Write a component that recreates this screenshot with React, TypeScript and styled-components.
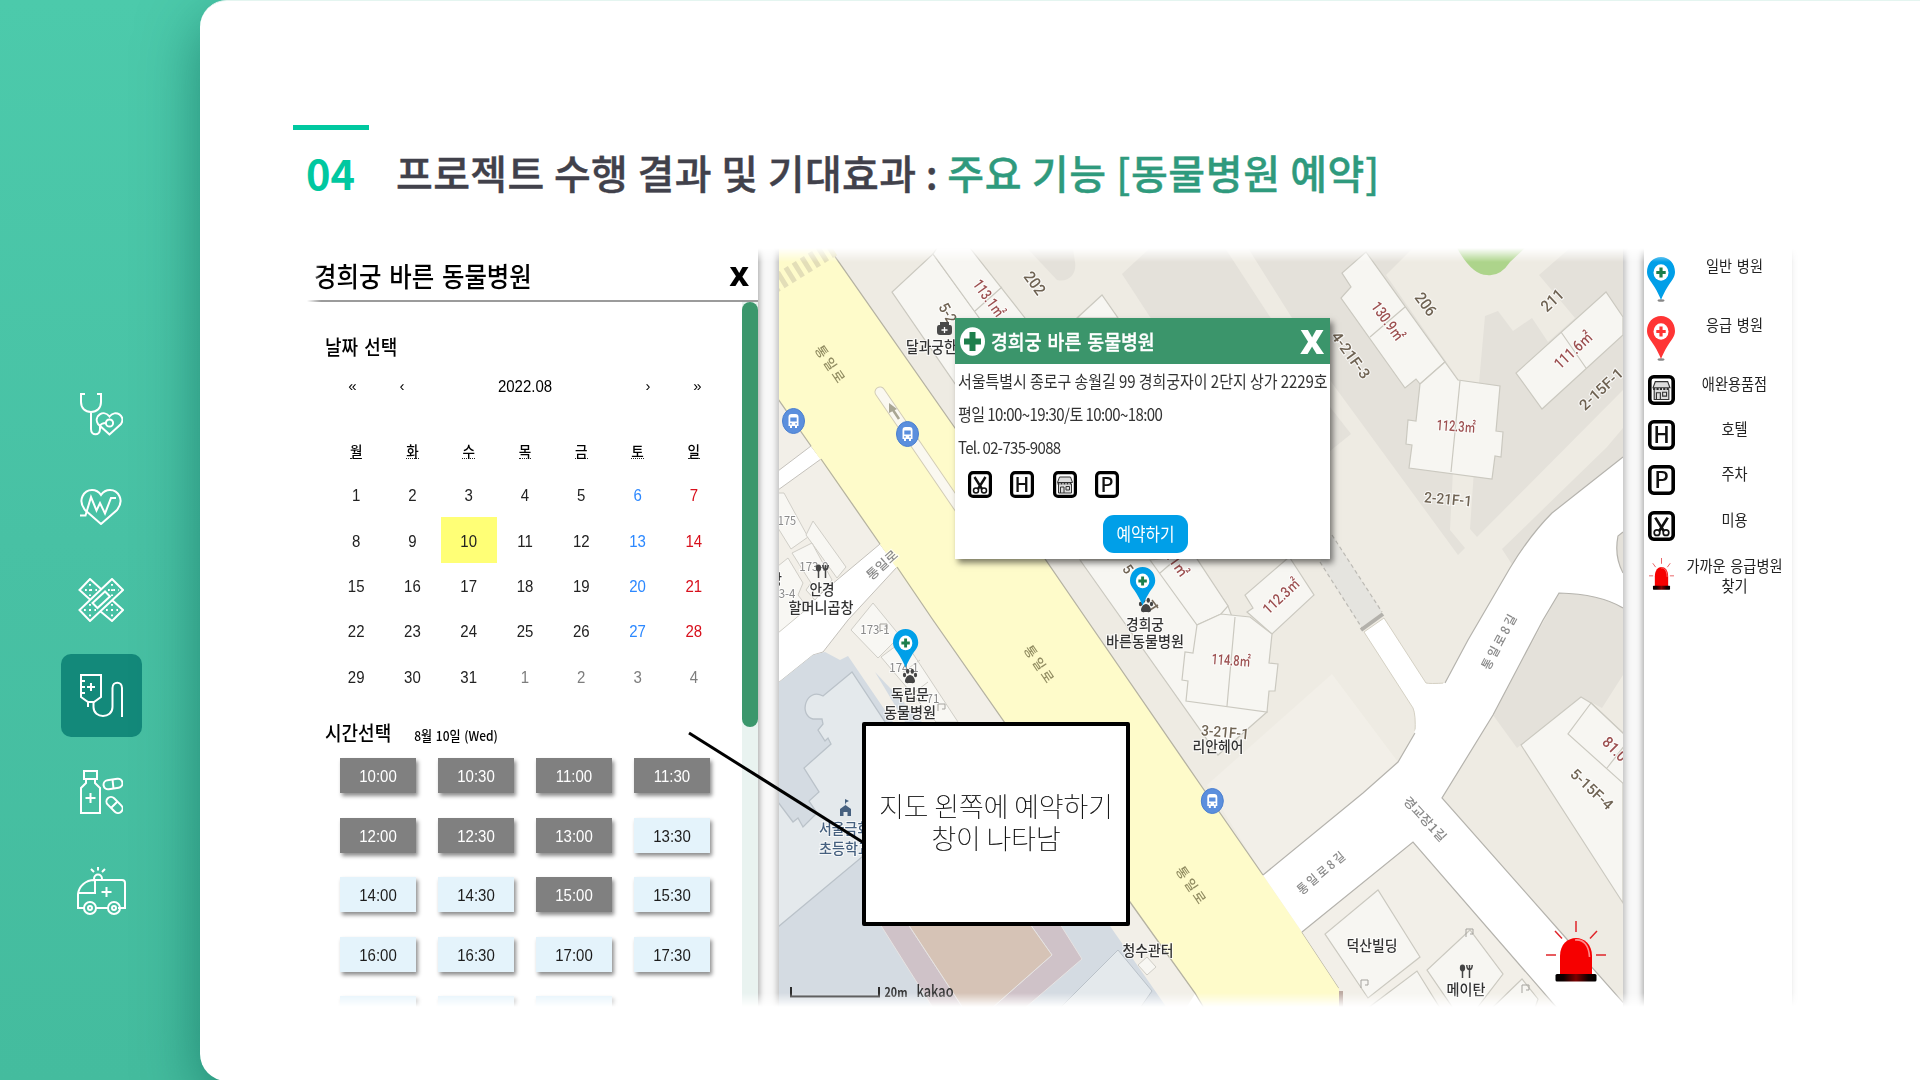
import React from 'react';
import styled, { createGlobalStyle } from 'styled-components';

const KR = '"Noto Sans CJK KR", "Noto Sans", sans-serif';
const NUM = '"Liberation Sans", "Noto Sans CJK KR", sans-serif';
const GREEN = '#3b956b';

const Global = createGlobalStyle`
  * { box-sizing: border-box; }
  body { margin: 0; overflow: hidden; font-family: ${KR}; }
`;

const Slide = styled.div`
  width: 1920px;
  height: 1080px;
  display: flex;
  overflow: hidden;
  background: linear-gradient(180deg, #4ccaab 0%, #48c1a4 50%, #44bc9e 100%);
`;

const SideNav = styled.nav`
  width: 200px;
  flex: none;
  padding: 393px 0 0 2px;
  display: flex;
  flex-direction: column;
  align-items: center;
  gap: 52.8px;
`;

const NavItem = styled.span<{ $active?: boolean }>`
  display: flex;
  padding: ${p => (p.$active ? '20px 19px' : '0')};
  margin: ${p => (p.$active ? '-20px -19px' : '0')};
  border-radius: 10px;
  background: ${p => (p.$active ? '#13897a' : 'transparent')};
`;

const Card = styled.main`
  flex: 1;
  height: 1081px;
  background: #fff;
  border-top: 1px solid #e4f5f0;
  border-radius: 27px 0 0 27px;
  box-shadow: 0 20px 60px rgba(0, 85, 72, 0.52);
`;

const Heading = styled.header`
  height: 247px;
  padding: 124px 0 0 93px;
`;

const Accent = styled.div`
  width: 76px;
  height: 5px;
  background: #00c8a0;
`;

const TitleRow = styled.h1`
  margin: 10px 0 0 13px;
  display: flex;
  align-items: center;
  height: 64px;
  font-size: 40px;
  font-weight: 500;
  line-height: 64px;
  letter-spacing: 0.35px;
  color: #41414b;
  white-space: nowrap;
  -webkit-text-stroke: 0.4px currentColor;
`;

const Num = styled.span`
  width: 90px;
  font-size: 41.5px;
  font-weight: 700;
  letter-spacing: 0;
  color: #00c8a0;
  -webkit-text-stroke: 0;
`;

const Feature = styled.span`
  color: #2f9a7d;
  letter-spacing: 0.6px;
`;

const Board = styled.section`
  position: relative;
  margin-left: 103px;
  width: 1496px;
  height: 760px;
  display: flex;
  background: #f8f8f8;
  mask-image: linear-gradient(180deg, transparent 0, #000 14px, #000 745px, transparent 759px),
    linear-gradient(90deg, transparent 4px, #000 18px, #000 1486px, transparent 1496px);
  mask-composite: intersect;
`;

const Stretch = styled.span<{ $y?: number; $ls?: number }>`
  display: inline-block;
  white-space: nowrap;
  letter-spacing: ${p => p.$ls ?? 0}px;
  transform: scaleY(${p => p.$y ?? 1.12});
`;

const Booking = styled.div`
  width: 455px;
  flex: none;
  background: #fff;
  display: flex;
  flex-direction: column;
  position: relative;
  z-index: 1;
  box-shadow: 2px 0 5px rgba(0, 0, 0, 0.28);
`;

const BookingHead = styled.div`
  height: 54px;
  flex: none;
  border-bottom: 2px solid #9b9b9b;
  display: flex;
  align-items: center;
  justify-content: space-between;
  padding: 2px 9px 0 11px;
  font-size: 24.4px;
  font-weight: 500;
  word-spacing: 2.4px;
`;

const CloseX = styled.span<{ $size: number }>`
  font: 800 ${p => p.$size}px/1 "Open Sans", sans-serif;
`;

const BookingBody = styled.div`
  flex: 1;
  min-height: 0;
  display: flex;
  overflow: hidden;
`;

const BookingMain = styled.div`
  flex: 1;
`;

const ScrollTrack = styled.div`
  width: 16px;
  height: 720px;
  background: #e9f3f0;
`;

const ScrollThumb = styled.div`
  height: 425px;
  border-radius: 8px;
  background: #3b976c;
`;

const SectionTitle = styled.div`
  padding-left: 22px;
  display: flex;
  align-items: center;
  font-size: 18px;
  font-weight: 500;
  line-height: 30px;
  word-spacing: 2px;
`;

const DateTitle = styled(SectionTitle)`
  margin-top: 29px;
`;

const TimeTitle = styled(SectionTitle)`
  margin-top: 16px;
  gap: 23px;
`;

const SubDate = styled.span`
  font-size: 12px;
  padding-top: 5px;
  word-spacing: 1px;
`;

const MonthNav = styled.div`
  margin: 8px 0 0 25px;
  width: 394px;
  height: 34px;
  display: grid;
  grid-template-columns: 49px 50px 1fr 50px 49px;
  align-items: center;
  text-align: center;
  font: 15px/34px ${NUM};
`;

const Month = styled(Stretch)`
  font-size: 15px;
`;

const Calendar = styled.div`
  margin: 22px 0 0 25px;
  width: 394px;
  display: grid;
  grid-template-columns: repeat(7, 1fr);
  grid-template-rows: 47px repeat(5, 45.4px);
`;

const Weekday = styled.span`
  display: flex;
  align-items: center;
  justify-content: center;
  padding-top: 4px;
  font-size: 13.6px;
  font-weight: 500;
`;

const WeekdayLabel = styled.span`
  line-height: 16px;
  border-bottom: 1px dotted #222;
`;

type Tone = 'week' | 'sat' | 'sun' | 'next';
const tones: Record<Tone, string> = { week: '#222', sat: '#2c88ff', sun: '#d8101c', next: '#7d7d7d' };

const Day = styled.span<{ $tone: Tone; $picked: boolean }>`
  display: flex;
  align-items: center;
  justify-content: center;
  font: 15px/1 ${NUM};
  color: ${p => tones[p.$tone]};
  background: ${p => (p.$picked ? '#ffff76' : 'transparent')};
`;

const Slots = styled.div`
  margin: 8px 0 0 37px;
  display: grid;
  grid-template-columns: repeat(4, 76px);
  grid-auto-rows: 35px;
  gap: 24.6px 22px;
`;

const Slot = styled.span<{ $taken: boolean }>`
  display: flex;
  align-items: center;
  justify-content: center;
  font: 15px/1 ${NUM};
  color: ${p => (p.$taken ? '#fff' : '#1d1d1d')};
  background: ${p => (p.$taken ? '#808080' : '#e4f3fb')};
  box-shadow: 2px 3px 4px rgba(0, 0, 0, 0.45);
`;

const MapPane = styled.div`
  position: relative;
  width: 844px;
  margin: 0 21px;
  flex: none;
  box-shadow: 0 0 6px 2px rgba(0, 0, 0, 0.25);
`;

const Popup = styled.div`
  position: absolute;
  left: 176px;
  top: 70px;
  width: 375px;
  height: 241px;
  background: #fff;
  box-shadow: 3px 4px 6px rgba(0, 0, 0, 0.5);
  display: flex;
  flex-direction: column;
`;

const PopupHead = styled.div`
  height: 46px;
  background: ${GREEN};
  color: #fff;
  display: flex;
  align-items: center;
  padding: 0 6px 0 5px;
  font-size: 18.3px;
  font-weight: 500;
  word-spacing: 2px;
`;

const PopupName = styled.span`
  flex: 1;
  padding-left: 6px;
  -webkit-text-stroke: 0.3px currentColor;
`;

const PopupLine = styled.div`
  padding-left: 3px;
  height: 33.2px;
  line-height: 33.2px;
  font-size: 15px;
  color: #333;
  white-space: nowrap;
`;

const PopupIcons = styled.div`
  padding: 7px 0 0 12.5px;
  display: flex;
  gap: 18.5px;
`;

const Reserve = styled.div`
  align-self: center;
  margin: 17.5px 0 0 6px;
  width: 85px;
  height: 38px;
  border-radius: 11px;
  background: #009fe8;
  color: #fff;
  font-size: 15.8px;
  line-height: 37px;
  text-align: center;
`;

const Legend = styled.div`
  width: 148px;
  flex: none;
  background: #fff;
  padding: 7px 3px 0 2px;
  display: flex;
  flex-direction: column;
  box-shadow: -2px 0 5px rgba(0, 0, 0, 0.28);
`;

const LegendRow = styled.div<{ $h: number }>`
  height: ${p => p.$h}px;
  display: grid;
  grid-template-columns: 30px 1fr;
  column-gap: 4px;
  justify-items: center;
  align-items: start;
  font-size: 14.2px;
  line-height: 20px;
  word-spacing: 1.5px;
  color: #222;
  text-align: center;

  svg {
    margin-top: 2px;
  }
`;

const TwoLines = styled(Stretch)`
  line-height: 18px;
  padding-top: 1px;
`;

const Callout = styled.div`
  position: absolute;
  left: 559px;
  top: 474px;
  width: 268px;
  height: 204px;
  padding-bottom: 5px;
  border: 4px solid #000;
  border-radius: 2px;
  background: #fff;
  display: flex;
  align-items: center;
  justify-content: center;
  text-align: center;
  font-size: 26.8px;
  font-weight: 100;
  line-height: 32px;
  color: #000;
  -webkit-text-stroke: 0.2px #000;
  white-space: nowrap;
  z-index: 3;
`;

const Connector = styled.svg`
  position: absolute;
  left: 383px;
  top: 480px;
  z-index: 2;
`;

/* ---------- icons ---------- */

const line = { fill: 'none', stroke: '#fff', strokeWidth: 2 } as const;

const Stethoscope = () => (
  <svg width="43" height="43" viewBox="0 0 43 43" {...line}>
    <path d="M5 1H1v8c0 6 4 10 10 10s10-4 10-10V1h-4M11 19v17c0 7 9 7 9 0v-4" />
    <path d="M29.500 41.500 18 31c-5-8 6-15 11.500-7.500C35 16 46.500 23 41 31Z" />
    <circle cx="29.500" cy="30" r="3.600" />
    <path d="M20 33c1-2.500 3-3 6-3" />
  </svg>
);
const HeartBeat = () => (
  <svg width="42" height="36" viewBox="0 0 42 36" {...line}>
    <path d="M21 35 5 21C-3 11 4 1 12 1c4 0 7 2 9 5 2-3 5-5 9-5 8 0 15 10 7 20Z" />
    <path d="M0 26.500h5.500L11 8l5.500 13.500L20 14l5 10.500L31 9h5" />
  </svg>
);
const Plasters = () => (
  <svg width="46" height="44" viewBox="0 0 46 44" {...line}>
    <path d="M34 1 1.500 32 12 43 45 12ZM23 11 12 1 1.500 12l11 10M22 33l12 10 11-11-11-10" />
    <path d="M27 13.500 14.500 25l5 5L32 18.500Z" />
    <g strokeDasharray="1.800 3.400">
      <path d="M12 6v12M7 12h12M34 6v12M30 12h11M12 26v13M6 32h12M34 26v13M28 32h12" />
    </g>
  </svg>
);
const IvBag = () => (
  <svg width="43" height="43" viewBox="0 0 43 43" {...line}>
    <path d="M1 1h20v22l-7 5H8l-7-5ZM1 7h4M1 13h4M1 19h4M8 28v5M11 9v8M7 13h8" />
    <path d="M13.500 28v5c0 12 19 12 19 0V14c0-7 9.500-7 9.500 0v29" />
  </svg>
);
const Bottle = () => (
  <svg width="43" height="44" viewBox="0 0 43 44" {...line}>
    <path d="M4 1h13v8H4ZM6 9v4L1 18v25h19V18l-5-5V9M10.500 23v10M5.500 28h10" />
    <rect x="-9.500" y="-4.500" width="19" height="9" rx="4.500" transform="translate(33 14) rotate(-9)" />
    <rect x="-9.500" y="-4.500" width="19" height="9" rx="4.500" transform="translate(34.500 35) rotate(45)" />
    <path d="m32.500 9.500 1 9M31 38l6.500-6.500" />
  </svg>
);
const Ambulance = () => (
  <svg width="49" height="48" viewBox="0 0 49 48" {...line}>
    <path d="M8 41H1V27c1-8 8-14 16-14h28q3 0 3 3v25h-7M18 41h14M1 26h17V13M17 12c0-6 8-6 8 0M29.500 20v10M24.500 25h10" />
    <path d="m14 2 3 3M21 0v3.500M28 2l-3 3" />
    <circle cx="13" cy="41" r="6" />
    <circle cx="13" cy="41" r="2" />
    <circle cx="37" cy="41" r="6" />
    <circle cx="37" cy="41" r="2" />
  </svg>
);

type Kind = 'H' | 'P' | 'cut' | 'shop';
const Badge = ({ kind, w = 24, h = 27 }: { kind: Kind; w?: number; h?: number }) => (
  <svg width={w} height={h} viewBox="0 0 24 27" preserveAspectRatio="none">
    <rect x="1.600" y="1.600" width="20.800" height="23.800" rx="3.500" fill="#fff" stroke="#000" strokeWidth="3.200" />
    {(kind === 'H' || kind === 'P') && (
      <text x="12" y="20.800" textAnchor="middle" fontFamily="Noto Sans CJK KR" fontSize="20" fontWeight="500" fill="#111">
        {kind}
      </text>
    )}
    {kind === 'cut' && (
      <g fill="none" stroke="#111">
        <path d="m6.500 6 7.500 12M17.500 6 10 18" strokeWidth="2.400" />
        <circle cx="8" cy="19.500" r="2.500" strokeWidth="1.500" />
        <circle cx="16" cy="19.500" r="2.500" strokeWidth="1.500" />
      </g>
    )}
    {kind === 'shop' && (
      <g fill="none" stroke="#333" strokeWidth="1">
        <path d="M6.500 6h11l2 5.500h-15ZM5.500 13v9h13v-9" fill="#ddd" />
        <path d="M4.500 12.500h15" strokeWidth="1.800" strokeDasharray="2 1" />
        <path d="M7.500 22v-6h3.500v6M13 15.500h3.500v3.500H13Z" />
      </g>
    )}
  </svg>
);

const PinShape = ({ color, base = false }: { color: string; base?: boolean }) => (
  <g>
    {base && <ellipse cx="14" cy="43.500" rx="3.500" ry="1.300" fill="#888" />}
    <path d="M14 0C6 0 0 6.500 0 15c0 6 4 9 7.500 15 3 5 5 9 6.500 13 1.500-4 3.500-8 6.500-13C24 24 28 21 28 15 28 6.500 22 0 14 0Z" fill={color} />
    <ellipse cx="14" cy="15.500" rx="7.500" ry="8.200" fill="#fff" />
    <path d="M14 10.500v10M9.300 15.500h9.400" stroke={color === '#009fe8' ? '#1d7f4c' : color} strokeWidth="3.200" />
  </g>
);
const Pin = ({ color }: { color: string }) => (
  <svg width="28" height="45" viewBox="0 0 28 45"><PinShape color={color} base /></svg>
);

const SirenShape = () => (
  <g>
    <g stroke="#e0262b" strokeWidth="1.500">
      <path d="M30 0v11M9 10l7 7.500M51 10l-7 7.500M0 34h10M60 34H50" />
    </g>
    <path d="M14 54V35c0-24 32-24 32 0v19Z" fill="#f60000" />
    <path d="M29 19c9-1 14 6 14.500 17" fill="none" stroke="#ff8a8a" strokeWidth="1.600" />
    <rect x="9.500" y="53" width="41" height="7.500" rx="1.500" fill="url(#sirenBase)" />
  </g>
);
const SirenGradient = () => (
  <linearGradient id="sirenBase">
    <stop offset="0" stopColor="#000" />
    <stop offset=".2" stopColor="#100" />
    <stop offset=".5" stopColor="#7c0000" />
    <stop offset=".8" stopColor="#100" />
    <stop offset="1" stopColor="#000" />
  </linearGradient>
);

/* ---------- map ---------- */

const RED = '#9c5050';
const BROWN = '#6f6353';
const GRAY = '#8a8a8a';

type LabelProps = {
  x: number; y: number; children: string; r?: number; size?: number;
  color?: string; w?: number; weight?: number; halo?: string;
};
const Label = ({ x, y, children, r = 0, size = 13, color = '#333', w, weight = 500, halo = '#fff' }: LabelProps) => (
  <text
    transform={`translate(${x} ${y}) rotate(${r}) scale(1 1.1)`}
    y={size * 0.36}
    textAnchor="middle"
    fontFamily={color === RED || color === BROWN ? `Roboto, ${KR}` : KR}
    fontSize={size}
    fontWeight={weight}
    fill={color}
    stroke={halo}
    strokeWidth="2"
    strokeOpacity=".7"
    paintOrder="stroke"
    textLength={w}
    lengthAdjust="spacingAndGlyphs"
  >
    {children}
  </text>
);

const Bus = ({ x, y }: { x: number; y: number }) => (
  <g transform={`translate(${x} ${y})`}>
    <ellipse rx="11" ry="12.500" fill="#5b8fdd" stroke="#4a7fd0" />
    <path d="M-5-4q0-3 3-3h4q3 0 3 3v9h-1.500v2h-2V5h-3v2h-2V5H-5Z" fill="#fff" />
    <path d="M-3.200-3.500h6.400V.5h-6.400ZM-3.500 2.200h1.800v1.300h-1.800ZM1.700 2.200h1.800v1.300H1.700Z" fill="#5b8fdd" />
  </g>
);
const Paw = ({ x, y }: { x: number; y: number }) => (
  <g transform={`translate(${x} ${y})`} fill="#444">
    <path d="M0-1c3 0 5 4 5 6 0 3-3 2-5 2s-5 1-5-2c0-2 2-6 5-6Z" />
    <ellipse cx="-5.500" cy="-1" rx="1.600" ry="2.300" />
    <ellipse cx="5.500" cy="-1" rx="1.600" ry="2.300" />
    <ellipse cx="-2.300" cy="-4.800" rx="1.700" ry="2.500" />
    <ellipse cx="2.300" cy="-4.800" rx="1.700" ry="2.500" />
  </g>
);
const Fork = ({ x, y }: { x: number; y: number }) => (
  <g transform={`translate(${x} ${y})`} fill="none" stroke="#444" strokeWidth="1.500">
    <ellipse cx="-3.500" cy="-3" rx="1.900" ry="2.700" fill="#444" />
    <path d="M-3.500 0v7M3.500-1v8M.8-6c0 6 5.400 6 5.400 0M3.500-6v5" />
  </g>
);

const MapArt = () => (
  <svg width="844" height="760" viewBox="779 248 844 760" style={{ display: 'block' }}>
    <defs><SirenGradient /></defs>
    <rect x="779" y="248" width="844" height="760" fill="#eeebe3" />
    <g fill="#e4e1da">
      <path d="M1150 248 1122 274 1152 320H1272L1225 248Z" />
      <path d="M1248 248 1292 318 1332 383 1458 555 1465 548 1450 530 1453 470H1474L1470 529 1477 537 1623 390V248H1570L1539 275 1575 318 1548 342 1532 318 1513 331 1498 311 1485 316 1479 383 1459 380 1386 275 1413 248Z" />
      <path d="M1330 407 1351 434 1330 451Z" />
      <path d="M1502 549 1513 566 1552 513 1623 457V428L1607 447Z" />
      <path d="M1559 593Q1600 594 1623 608V675L1602 708 1581 697 1517 748 1493 715Z" />
      <path d="M1623 530 1617 540V557L1623 573Z" />
      <path d="M1027 248 1057 280C1070 283 1077 272 1075 262L1073 248Z" />
    </g>
    <path d="M1457 248Q1472 275 1487 275 1500 277 1510 262L1525 248Z" fill="#add48b" />
    <path d="M1207 785 1332 674 1398 762 1363 793 1263 875Z" fill="#f2efe8" />

    {/* west side of the boulevard */}
    <path d="M779 395 933 620 1206 1008H779Z" fill="#f2efe8" />
    <g fill="#fff" stroke="#c4c1bb">
      <path d="M778 471 811 446 821 459 778 490Z" />
      <path d="M880 544 837 580 778 630V683L813 655 823 652 848 620 897 567Z" />
    </g>
    <g fill="#f8f7f3" stroke="#d0cec7">
      <path d="M778 493 784 493 808 537 791 549 778 528Z" />
      <path d="M813 521 846 567 837 578 806 535Z" />
      <path d="M792 553 812 543 832 580 815 600 806 590 811 583Z" />
      <path d="M778 566 788 558 803 583 798 595 808 608 778 633Z" />
      <path d="M873 603 851 630 878 658 900 636Z" />
      <path d="M881 657 904 640 958 722H936Z" />
      <path d="M915 692 928 682M903 672 920 660" />
    </g>

    {/* school grounds */}
    <path d="M778 683 813 655 825 652 840 660 848 656 893 722 1110 926 1167 1008H778Z" fill="#d4dbe2" />
    <path d="M875 672 922 722H905Z" fill="#d4dbe2" />
    <path d="M852 672 823 696C806 687 798 715 813 719H822L823 724 818 730 825 741 828 738 831 744 804 768 819 792 809 801 817 813 803 827 798 818 793 822 778 802V927L862 857 885 722Z" fill="#e4e9ec" stroke="#bac2c9" strokeWidth="1.300" />
    <g stroke="#e6e3e2">
      <path d="M880 924H908L963 1008H933Z" fill="#cfc2c8" />
      <path d="M1030 924H1060L1082 959 1025 1008H992L1052 955Z" fill="#cfc2c8" />
      <path d="M908 924H1030L1052 955 992 1008H963Z" fill="#d6c3b6" />
    </g>
    <path d="M1118 950 1152 991 1140 1008H1060Z" fill="#e4e9ec" stroke="#bac2c9" />
    <path d="M1147 957 1156 967 1147 975 1138 965Z" fill="#f8f7f3" stroke="#d0cec7" />

    {/* boulevard */}
    <path d="M1186 1008 1195 994 1206 1008Z" fill="#fff" />
    <path d="M778 248H829L955 428 1087 620 1202 787 1263 875 1302 932 1339 988 1341 1008H1204L1195 993 1130 902 933 620 778 399Z" fill="#fefbca" />
    <path d="M829 248 955 428 1087 620 1202 787 1263 875M1302 932 1339 988M1204 1008 1195 993 1130 902 933 620 897 567M880 544 821 459M811 446 778 399" fill="none" stroke="#b5b2a2" strokeWidth="1.300" />
    <path d="M772 286 836 246" stroke="#e3deb8" strokeWidth="17" strokeDasharray="5 4.500" />
    <path d="M880 392 962 512" stroke="#d3cdb6" strokeWidth="11" strokeLinecap="round" />
    <path d="M880 392 962 512" stroke="#faf8f0" strokeWidth="9" strokeLinecap="round" />
    <path d="m899 419-8-12" stroke="#a9a693" strokeWidth="2.500" />
    <path d="m889 403 8 6-8 4Z" fill="#a9a693" />

    {/* side streets */}
    <path d="M1302 932 1413 842 1557 1008H1345L1339 988Z" fill="#f2efe8" />
    <path d="M1623 457 1552 513Q1530 535 1510 568L1468 640 1445 683 1415 733 1398 762 1363 793 1263 875 1302 932 1413 842 1557 1008H1628L1565 937 1442 798 1493 715 1543 620 1559 593Q1600 594 1623 608V573Q1614 556 1618 536L1623 532Z" fill="#fff" />
    <g fill="none" stroke="#b5b3ad" strokeWidth="1.200">
      <path d="M1623 457 1552 513Q1530 535 1510 568L1468 640 1445 683M1415 733 1398 762 1363 793 1263 875M1302 932 1413 842 1557 1008M1628 1008 1565 937 1442 798 1493 715 1543 620 1559 593Q1600 594 1623 608M1623 573Q1614 556 1618 536L1623 532" />
    </g>
    <path d="M1364 632 1413 708Q1416 715 1415 733L1445 683Q1430 684 1426 683L1384 618Z" fill="#fff" stroke="#d5d1c4" />
    <path d="M1415 733 1445 683" stroke="#fff" strokeWidth="2.500" />
    <path d="M1320 562 1332 535 1382 612 1362 628Z" fill="#e5e4df" />
    <path d="M1332 535 1382 612M1320 562 1362 628" stroke="#bcbab4" strokeWidth="1.200" strokeDasharray="4 3" />
    <path d="M1361 630 1383 614" stroke="#b3b1ab" strokeWidth="4" />

    {/* apartment blocks */}
    <g fill="#f7f6f2" stroke="#cbc9c0" strokeWidth="1.200">
      <path d="M933 254 892 292 980 420 1010 360Z" />
      <path d="M937 248H970L1025 318 1020 330H988L933 254ZM975 311 1002 287" />
      <path d="M1102 295 1077 318H1118Z" />
      <path d="M1366 252 1342 273 1351 287 1341 298 1405 388 1416 379 1420 384 1445 362ZM1370 337 1405 307" />
      <path d="M1445 362 1458 380 1500 386 1496 431 1503 432 1501 457 1495 456 1492 479 1409 468 1412 445 1406 444 1408 420 1416 421 1420 384ZM1460 381 1451 472" />
      <path d="M1606 292 1516 373 1542 409 1623 335V317ZM1561 332 1586 368" />
      <path d="M1080 560 1218 755 1267 712 1228 606 1195 560Z" />
      <path d="M1150 560 1197 625 1221 614 1228 606 1195 556ZM1160 573 1175 560" />
      <path d="M1288 558 1245 595 1253 608 1247 612 1272 634 1314 595 1290 558Z" />
      <path d="M1197 625 1193 653 1185 652 1182 680 1188 681 1186 701 1267 712 1269 691 1275 691 1278 664 1269 663 1272 634 1250 617 1221 614ZM1235 617 1227 706" />
      <path d="M1581 697 1521 745 1623 903V733L1591 703Z" />
      <path d="M1591 703 1568 734 1625 785V735ZM1607 768 1625 745" />
      <path d="M1378 890 1325 934 1368 998 1420 957Z" />
      <path d="M1368 1008 1417 971 1440 1008Z" />
      <path d="M1470 930 1427 970 1453 1008H1477L1503 974Z" />
      <path d="M1522 979 1492 1008H1535L1538 999Z" />
    </g>
    <path d="M1339 991h4v16h-4Z" fill="#bdaaa2" />

    {/* small building numbers */}
    <Label x={787} y={521} size={11} color={GRAY} weight={400}>175</Label>
    <Label x={814} y={566} size={11.5} color={GRAY} weight={400}>173-9</Label>
    <Label x={787} y={593} size={11.5} color={GRAY} weight={400}>3-4</Label>
    <Label x={875} y={629} size={11.5} color={GRAY} weight={400}>173-1</Label>
    <Label x={904} y={667} size={11.5} color={GRAY} weight={400}>174-1</Label>
    <Label x={933} y={698} size={11.5} color={GRAY} weight={400}>71</Label>
    <g fill="none" stroke="#a5a39e">
      <path d="M880 632v-8h7v5h-3M938 711v-7h7v5h-3M1466 937v-8h7v5h-3M1361 988v-8h7v5h-3M1522 993v-8h7v5h-3" />
    </g>

    <Label x={948} y={313} r={60} size={14} color={BROWN}>5-2</Label>
    <Label x={989} y={298} r={54} size={14} w={42} color={RED}>113.1㎡</Label>
    <Label x={1035} y={283} r={54} size={14.5} color={BROWN}>202</Label>
    <Label x={1388} y={321} r={54} size={14} w={44} color={RED}>130.9㎡</Label>
    <Label x={1351} y={355} r={54} size={13.5} w={54} color={BROWN}>4-21F-3</Label>
    <Label x={1426} y={304} r={54} size={14.5} color={BROWN}>206</Label>
    <Label x={1552} y={300} r={-43} size={14.5} color={BROWN}>211</Label>
    <Label x={1573} y={350} r={-43} size={14} w={46} color={RED}>111.6㎡</Label>
    <Label x={1601} y={389} r={-43} size={13.5} w={54} color={BROWN}>2-15F-1</Label>
    <Label x={1456} y={426} r={4} size={13.5} w={39} color={RED}>112.3㎡</Label>
    <Label x={1448} y={499} r={5} size={13.5} w={48} color={BROWN}>2-21F-1</Label>
    <Label x={1178} y={565} r={54} size={13.5} color={RED}>.1㎡</Label>
    <Label x={1281} y={596} r={-43} size={13.5} w={44} color={RED}>112.3㎡</Label>
    <Label x={1231} y={660} r={4} size={13.5} w={39} color={RED}>114.8㎡</Label>
    <Label x={1225} y={732} r={5} size={13.5} w={48} color={BROWN}>3-21F-1</Label>
    <Label x={1615} y={749} r={45} size={14} color={RED}>81.0</Label>
    <Label x={1592} y={789} r={43} size={13.5} w={52} color={BROWN}>5-15F-4</Label>
    <Label x={1128} y={569} r={54} size={13} color={BROWN}>5</Label>

    <Label x={830} y={364} r={56} size={12} w={42} color="#928d62" halo="#fefbca">통 일 로</Label>
    <Label x={1039} y={664} r={56} size={12} w={42} color="#928d62" halo="#fefbca">통 일 로</Label>
    <Label x={1191} y={885} r={56} size={12} w={42} color="#928d62" halo="#fefbca">통 일 로</Label>
    <Label x={882} y={565} r={-42} size={11.5} w={37} color={GRAY}>통일로</Label>
    <Label x={1499} y={642} r={-62} size={11.5} w={60} color={GRAY}>통 일 로 8 길</Label>
    <Label x={1321} y={873} r={-40} size={11.5} w={58} color={GRAY}>통 일 로 8 길</Label>
    <Label x={1425} y={819} r={47} size={11.5} w={56} color={GRAY}>경교장1길</Label>

    <path d="M940 322h9v3h-9zM939 325h11q2 0 2 3v4q0 3-3 3h-9q-3 0-3-3v-4q0-3 2-3" fill="#4a4a4a" />
    <path d="M944.500 327v6M941.500 330h6" stroke="#fff" strokeWidth="1.300" />
    <Label x={944} y={347} size={14} w={76}>달과궁한의원</Label>
    <Fork x={822} y={571} />
    <Label x={822} y={590} size={13.5} w={25}>안경</Label>
    <Label x={821} y={608} size={13.5} w={65}>할머니곱창</Label>
    <Label x={776} y={580} size={13}>당</Label>
    <Label x={910} y={695} size={13.5} w={38}>독립문</Label>
    <Label x={910} y={713} size={13.5} w={52}>동물병원</Label>
    <Label x={1145} y={625} size={13.5} w={38}>경희궁</Label>
    <Label x={1145} y={642} size={13.5} w={78}>바른동물병원</Label>
    <Label x={1218} y={747} size={13.5} w={51}>리안헤어</Label>
    <path d="M840 816v-7l5.500-4 5.500 4v7h-3.500v-4h-4v4ZM845 805v-6l4 2-3 1.500" fill="#46607f" />
    <Label x={851} y={829} size={13.5} w={64} color="#46607f">서울금화초</Label>
    <Label x={845} y={849} size={13.5} w={52} color="#46607f">초등학교</Label>
    <Label x={1148} y={951} size={13.5} w={51}>청수관터</Label>
    <Label x={1372} y={946} size={13.5} w={51}>덕산빌딩</Label>
    <Fork x={1466} y={971} />
    <Label x={1466} y={990} size={13.5} w={39}>메이탄</Label>

    <Bus x={793.5} y={421} />
    <Bus x={907.5} y={434} />
    <Bus x={1212.3} y={801} />
    <path d="M1152 600l6 8M1150 610l8-5" stroke="#75695a" strokeWidth="1.500" />
    <Paw x={1146} y={605} />
    <Paw x={910} y={676} />
    <g transform="translate(1130 567) scale(.9 .9)"><PinShape color="#009fe8" /></g>
    <g transform="translate(893 629) scale(.9 .9)"><PinShape color="#009fe8" /></g>

    <path d="M791 987v9.500h88V987" fill="none" stroke="#2b2b2b" strokeWidth="2" />
    <Label x={896} y={992.5} size={11.5} w={23} weight={700} halo="none">20m</Label>
    <Label x={935} y={991} size={14.5} w={37} halo="none">kakao</Label>
    <g transform="translate(1546 921)"><SirenShape /></g>
  </svg>
);

/* ---------- data ---------- */

const weekdays = ['월', '화', '수', '목', '금', '토', '일'];
const days = Array.from({ length: 35 }, (_, i) => {
  const next = i > 30;
  const col = i % 7;
  const tone: Tone = next ? 'next' : col === 5 ? 'sat' : col === 6 ? 'sun' : 'week';
  return { n: next ? i - 30 : i + 1, tone, picked: i === 9 };
});
const times = [
  '10:00', '10:30', '11:00', '11:30', '12:00', '12:30', '13:00', '13:30', '14:00', '14:30',
  '15:00', '15:30', '16:00', '16:30', '17:00', '17:30', '18:00', '18:30', '19:00',
];
const taken = new Set(['10:00', '10:30', '11:00', '11:30', '12:00', '12:30', '13:00', '15:00']);

export default function App() {
  return (
    <Slide>
      <Global />
      <SideNav>
        <NavItem><Stethoscope /></NavItem>
        <NavItem><HeartBeat /></NavItem>
        <NavItem><Plasters /></NavItem>
        <NavItem $active><IvBag /></NavItem>
        <NavItem><Bottle /></NavItem>
        <NavItem><Ambulance /></NavItem>
      </SideNav>
      <Card>
        <Heading>
          <Accent />
          <TitleRow>
            <Num>04</Num>
            <span>프로젝트 수행 결과 및 기대효과 : <Feature>주요 기능 [동물병원 예약]</Feature></span>
          </TitleRow>
        </Heading>
        <Board>
          <Booking>
            <BookingHead>
              <Stretch>경희궁 바른 동물병원</Stretch>
              <CloseX $size={27}>X</CloseX>
            </BookingHead>
            <BookingBody>
              <BookingMain>
                <DateTitle><Stretch>날짜 선택</Stretch></DateTitle>
                <MonthNav>
                  <span>«</span>
                  <span>‹</span>
                  <Month>2022.08</Month>
                  <span>›</span>
                  <span>»</span>
                </MonthNav>
                <Calendar>
                  {weekdays.map(d => (
                    <Weekday key={d}><WeekdayLabel><Stretch>{d}</Stretch></WeekdayLabel></Weekday>
                  ))}
                  {days.map((d, i) => (
                    <Day key={i} $tone={d.tone} $picked={d.picked}><Stretch>{d.n}</Stretch></Day>
                  ))}
                </Calendar>
                <TimeTitle>
                  <Stretch>시간선택</Stretch>
                  <SubDate><Stretch>8월 10일 (Wed)</Stretch></SubDate>
                </TimeTitle>
                <Slots>
                  {times.map(t => (
                    <Slot key={t} $taken={taken.has(t)}><Stretch>{t}</Stretch></Slot>
                  ))}
                </Slots>
              </BookingMain>
              <ScrollTrack><ScrollThumb /></ScrollTrack>
            </BookingBody>
          </Booking>
          <MapPane>
            <MapArt />
            <Popup>
              <PopupHead>
                <svg width="25" height="29" viewBox="0 0 25 29">
                  <ellipse cx="12.500" cy="14.500" rx="12.500" ry="14.300" fill="#fff" />
                  <path d="M12.500 5v19M4 14.500h17" stroke="#1d7f4c" strokeWidth="6" />
                </svg>
                <PopupName><Stretch>경희궁 바른 동물병원</Stretch></PopupName>
                <CloseX $size={33}>X</CloseX>
              </PopupHead>
              <PopupLine><Stretch $ls={-0.06}>서울특별시 종로구 송월길 99 경희궁자이 2단지 상가 2229호</Stretch></PopupLine>
              <PopupLine><Stretch $ls={-0.58}>평일 10:00~19:30/토 10:00~18:00</Stretch></PopupLine>
              <PopupLine><Stretch $ls={-0.68}>Tel. 02-735-9088</Stretch></PopupLine>
              <PopupIcons>
                <Badge kind="cut" />
                <Badge kind="H" />
                <Badge kind="shop" />
                <Badge kind="P" />
              </PopupIcons>
              <Reserve><Stretch>예약하기</Stretch></Reserve>
            </Popup>
          </MapPane>
          <Legend>
            <LegendRow $h={58.5}><Pin color="#009fe8" /><Stretch>일반 병원</Stretch></LegendRow>
            <LegendRow $h={59.5}><Pin color="#ff3535" /><Stretch>응급 병원</Stretch></LegendRow>
            <LegendRow $h={44.5}><Badge kind="shop" w={27} h={30} /><Stretch>애완용품점</Stretch></LegendRow>
            <LegendRow $h={45.5}><Badge kind="H" w={27} h={30} /><Stretch>호텔</Stretch></LegendRow>
            <LegendRow $h={45.5}><Badge kind="P" w={27} h={30} /><Stretch>주차</Stretch></LegendRow>
            <LegendRow $h={47}><Badge kind="cut" w={27} h={30} /><Stretch>미용</Stretch></LegendRow>
            <LegendRow $h={50}>
              <svg width="25" height="32" viewBox="0 0 60 61" preserveAspectRatio="none"><SirenShape /></svg>
              <TwoLines>가까운 응급병원<br />찾기</TwoLines>
            </LegendRow>
          </Legend>
          <Connector width="180" height="120" viewBox="686 728 180 120">
            <path d="M689 733 864 843" stroke="#000" strokeWidth="3" />
          </Connector>
          <Callout>지도 왼쪽에 예약하기<br />창이 나타남</Callout>
        </Board>
      </Card>
    </Slide>
  );
}
